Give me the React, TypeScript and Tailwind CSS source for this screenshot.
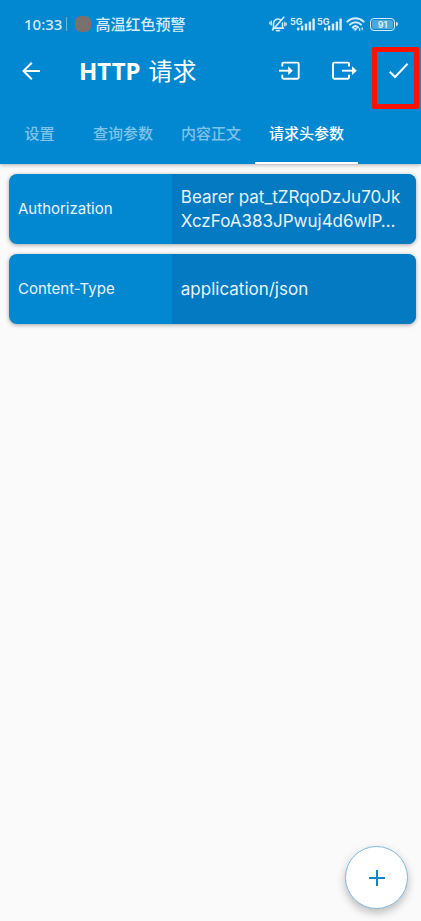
import { useState } from 'react';

const tabs = ['设置', '查询参数', '内容正文', '请求头参数'];

const headers = [
  { name: 'Authorization', value: 'Bearer pat_tZRqoDzJu70JkXczFoA383JPwuj4d6wlP…' },
  { name: 'Content-Type', value: 'application/json' },
];

function MutedBell() {
  return (
    <svg className="w-[18px] h-4" viewBox="0 0 18 16" fill="none" stroke="currentColor" strokeWidth="1.6" strokeLinecap="round">
      <path d="M4.5 12V7.5a4.5 4.5 0 0 1 7-3.7M13.5 7v5h-7M4 12.2h10.5M7.5 14.6h3" />
      <path d="M14.8 1.2 3.5 14" />
      <path d="M2.3 5v4M.8 6v2M15.8 6v4M17.2 7v2" strokeWidth="1.2" />
    </svg>
  );
}

function Signal() {
  return (
    <div className="flex items-start">
      <span className="w-[11px] text-[9px] leading-[9px] font-bold">5G</span>
      <svg className="w-[18px] h-[14px] -ml-1" viewBox="0 0 18 14" fill="currentColor">
        <rect x="0" y="10.5" width="2.4" height="3" rx=".7" />
        <rect x="3.9" y="8.5" width="2.4" height="5" rx=".7" />
        <rect x="7.8" y="6.5" width="2.4" height="7" rx=".7" />
        <rect x="11.7" y="4.5" width="2.4" height="9" rx=".7" />
        <rect x="15.4" y="1.5" width="2.4" height="12" rx=".7" />
      </svg>
    </div>
  );
}

function Wifi() {
  return (
    <svg className="w-[19px] h-4" viewBox="0 0 19 16" fill="none" stroke="currentColor" strokeWidth="2" strokeLinecap="round">
      <path d="M1.4 5.6a11.4 11.4 0 0 1 16.2 0M4 8.6a7.8 7.8 0 0 1 11 0M6.7 11.4a4 4 0 0 1 5.4 0" />
      <path d="M7.8 12.6h3.2l-1.6 1.8z" fill="currentColor" strokeWidth=".8" />
      <path d="M13.6 12.6v1.6M16.2 12v1.6" strokeWidth="1.4" />
    </svg>
  );
}

function Battery() {
  return (
    <div className="flex items-center gap-px">
      <div className="w-[25px] h-[13px] rounded-[4px] border border-[#d5ebf8] p-px">
        <div className="h-full rounded-[2px] bg-[#4ba8dd] text-[9px] leading-[9px] font-bold text-center">91</div>
      </div>
      <div className="w-[2px] h-1 rounded-r bg-[#d5ebf8]" />
    </div>
  );
}

function StatusBar() {
  return (
    <div className="h-12 pl-6 pr-[23px] flex items-center justify-between text-[#d5ebf8]">
      <div className="flex items-center text-[15px] font-medium">
        <span className="font-['Noto_Sans',sans-serif]">10:33</span>
        <span className="w-px h-[14px] ml-1 bg-[#6cb6e3]" />
        <span className="w-4 h-4 ml-2 mr-1 rounded-[6px] bg-[#7b706c]" />
        <span>高温红色预警</span>
      </div>
      <div className="flex items-center font-['Inter',sans-serif]">
        <MutedBell />
        <div className="flex gap-[2px] ml-[3px]">
          <Signal />
          <Signal />
        </div>
        <div className="flex items-center gap-[5px] ml-1">
          <Wifi />
          <Battery />
        </div>
      </div>
    </div>
  );
}

export default function App() {
  const [active, setActive] = useState(3);

  return (
    <div className="min-h-screen bg-[#fafafa] font-['Noto_Sans','Noto_Sans_CJK_SC',sans-serif]">
      <header className="bg-[#0288d1] text-white shadow-[0_1px_4px_rgba(0,0,0,0.3)]">
        <StatusBar />
        <div className="h-[46px] flex items-center pl-5 pr-[10px]">
          <button aria-label="返回" className="w-6 h-6">
            <svg viewBox="0 0 24 24" fill="none" stroke="currentColor" strokeWidth="2">
              <path d="M20 12H3.6M11.8 3.7 3.5 12l8.3 8.3" />
            </svg>
          </button>
          <h1 className="ml-[35px] flex-1 flex items-baseline gap-2 text-[24px] leading-8">
            <b>HTTP</b>
            <span>请求</span>
          </h1>
          <div className="flex items-center gap-[30px]">
            <button aria-label="导入" className="w-6 h-6">
              <svg viewBox="0 0 24 24" fill="none" stroke="currentColor" strokeWidth="1.9">
                <path d="M5.3 7.6V4.8a1.2 1.2 0 0 1 1.2-1.2h14a1.2 1.2 0 0 1 1.2 1.2v13.8a1.2 1.2 0 0 1-1.2 1.2h-14a1.2 1.2 0 0 1-1.2-1.2v-2.8" />
                <path d="M2 11.7h11" />
                <path d="M11.2 7.3v8.8l4.6-4.4z" fill="currentColor" stroke="none" />
              </svg>
            </button>
            <button aria-label="导出" className="w-[26px] h-6">
              <svg viewBox="0 0 26 24" fill="none" stroke="currentColor" strokeWidth="1.9">
                <path d="M18 7.6V4.8a1.2 1.2 0 0 0-1.2-1.2H3.2A1.2 1.2 0 0 0 2 4.8v13.8a1.2 1.2 0 0 0 1.2 1.2h13.6a1.2 1.2 0 0 0 1.2-1.2v-2.8" />
                <path d="M11 11.7h12" />
                <path d="M21 7.3v8.8l4.8-4.4z" fill="currentColor" stroke="none" />
              </svg>
            </button>
            <button aria-label="保存" className="relative w-6 h-6">
              <svg viewBox="0 0 24 24" fill="none" stroke="currentColor" strokeWidth="2">
                <path d="m2.8 12.8 5.2 5.2L20.6 4.8" />
              </svg>
              <span className="absolute -left-[15px] -top-3 w-[47px] h-[62px] border-[5px] border-[#ff1100] rounded-[2px]" />
            </button>
          </div>
        </div>
        <nav role="tablist" className="mt-[10px] h-[60px] flex text-[15px] font-medium">
          {tabs.map((tab, i) => (
            <button
              key={tab}
              role="tab"
              aria-selected={i === active}
              onClick={() => setActive(i)}
              className={`min-w-[79px] px-[14px] border-b-2 ${
                i === active ? 'border-b-white text-white' : 'border-b-transparent text-[#80c3e8]'
              }`}
            >
              {tab}
            </button>
          ))}
        </nav>
      </header>

      <main className="pl-[9px] pr-[5px] pt-[10px] flex flex-col gap-[10px]">
        {headers.map((header) => (
          <div
            key={header.name}
            className="h-[70px] flex rounded-[8px] overflow-hidden bg-[#0288d1] text-[#e8f4fb] font-['Inter',sans-serif] shadow-[0_1px_4px_rgba(0,0,0,0.35)]"
          >
            <div className="w-2/5 px-[9px] flex items-center text-[15px]">{header.name}</div>
            <div className="w-3/5 bg-[#037ac2] pl-[9px] pr-3 flex items-center">
              <p className="text-[17px] leading-6 break-all line-clamp-2">{header.value}</p>
            </div>
          </div>
        ))}
      </main>

      <button
        aria-label="添加"
        className="fixed right-[13px] bottom-3 w-[63px] h-[63px] rounded-full bg-white border border-[#7fb9dc] text-[#0288d1] flex items-center justify-center shadow-[0_4px_8px_rgba(0,0,0,0.25)]"
      >
        <svg className="w-4 h-4" viewBox="0 0 16 16" stroke="currentColor" strokeWidth="2">
          <path d="M8 0v16M0 8h16" />
        </svg>
      </button>
    </div>
  );
}
